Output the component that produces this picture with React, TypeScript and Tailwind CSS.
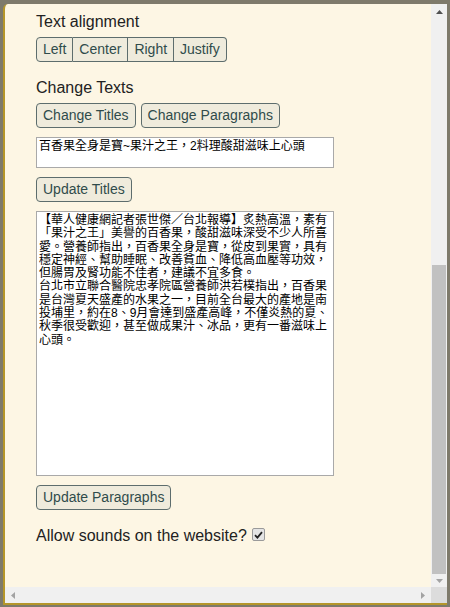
const titleText = "百香果全身是寶~果汁之王，2料理酸甜滋味上心頭";

const paragraphText =
    "【華人健康網記者張世傑／台北報導】炙熱高溫，素有「果汁之王」美譽的百香果，酸甜滋味深受不少人所喜愛。營養師指出，百香果全身是寶，從皮到果實，具有穩定神經、幫助睡眠、改善貧血、降低高血壓等功效，但腸胃及腎功能不佳者，建議不宜多食。\n" +
    "台北市立聯合醫院忠孝院區營養師洪若樸指出，百香果是台灣夏天盛產的水果之一，目前全台最大的產地是南投埔里，約在8、9月會達到盛產高峰，不僅炎熱的夏、秋季很受歡迎，甚至做成果汁、冰品，更有一番滋味上心頭。";

const btn =
    "px-[6px] py-[3px] border border-[#5d6d6d] bg-[#efebdc] text-[#2f4b4b] text-[14px] leading-[17px] rounded-[4px]";

function AlignGroup() {
    const items = ["Left", "Center", "Right", "Justify"];
    return (
        <div className="mt-[6px] flex">
            {items.map((label, i) => (
                <button
                    key={label}
                    type="button"
                    className={
                        "px-[6px] py-[3px] border-y border-r border-[#5d6d6d] bg-[#efebdc] text-[#2f4b4b] text-[14px] leading-[17px] " +
                        (i === 0 ? "border-l rounded-l-[4px] " : "") +
                        (i === items.length - 1 ? "rounded-r-[4px]" : "")
                    }
                >
                    {label}
                </button>
            ))}
        </div>
    );
}

function Checkbox() {
    return (
        <span className="ml-[5px] mt-[1px] w-[13px] h-[13px] flex items-center justify-center border border-[#9a9a9a] bg-[#e4e4e4] rounded-[2px]">
            <svg width="9" height="8" viewBox="0 0 9 8">
                <path d="M1 4.2 L3.4 6.6 L8 1.2" fill="none" stroke="#222" strokeWidth="1.8" />
            </svg>
        </span>
    );
}

export default function App() {
    return (
        <div className="w-[450px] h-[607px] bg-[#7e7a6b] pt-[4px] pl-[3px] pr-[3px] pb-[2px] flex flex-col">
            <div className="flex-1 min-h-0 flex flex-col bg-[#fdf6e4] border-l-2 border-b-2 border-[#b5962a] rounded-tl-[5px] overflow-hidden">
                <div className="flex-1 min-h-0 flex">
                    {/* page content */}
                    <div className="flex-1 min-w-0 pl-[31px] pt-[9px] flex flex-col items-start font-['Liberation_Sans',sans-serif] text-[#222]">
                        <div className="text-[16px] leading-[18px]">Text alignment</div>
                        <AlignGroup />

                        <div className="mt-[17px] text-[16px] leading-[18px]">Change Texts</div>
                        <div className="mt-[6px] flex gap-[5px]">
                            <button type="button" className={btn}>Change Titles</button>
                            <button type="button" className={btn}>Change Paragraphs</button>
                        </div>

                        <textarea
                            defaultValue={titleText}
                            className="mt-[9px] w-[298px] h-[31px] p-[2px] border border-[#a9a9a9] bg-white text-black text-[12px] leading-[13.3px] resize-none overflow-hidden font-['Liberation_Sans','Noto_Sans_CJK_TC',sans-serif]"
                        />
                        <button type="button" className={"mt-[9px] " + btn}>Update Titles</button>

                        <textarea
                            defaultValue={paragraphText}
                            className="mt-[9px] w-[298px] h-[265px] p-[2px] border border-[#a9a9a9] bg-white text-black text-[12px] leading-[13.3px] resize-none overflow-hidden font-['Liberation_Sans','Noto_Sans_CJK_TC',sans-serif]"
                        />
                        <button type="button" className={"mt-[9px] " + btn}>Update Paragraphs</button>

                        <div className="mt-[17px] flex items-start text-[16px] leading-[18px]">
                            <span>Allow sounds on the website?</span>
                            <Checkbox />
                        </div>
                    </div>

                    {/* vertical scrollbar */}
                    <div className="w-[16px] bg-[#f0f0f0] flex flex-col">
                        <div className="h-[16px] flex items-center justify-center">
                            <svg width="7" height="4" viewBox="0 0 7 4">
                                <path d="M0 4 L3.5 0 L7 4Z" fill="#505050" />
                            </svg>
                        </div>
                        <div className="h-[245px]" />
                        <div className="h-[309px] mx-[1px] bg-[#c1c1c1]" />
                        <div className="flex-1 flex items-center justify-center">
                            <svg width="7" height="4" viewBox="0 0 7 4">
                                <path d="M0 0 L7 0 L3.5 4Z" fill="#a3a3a3" />
                            </svg>
                        </div>
                    </div>
                </div>

                {/* horizontal scrollbar */}
                <div className="h-[16px] flex bg-[#f0f0f0]">
                    <div className="w-[16px] flex items-center justify-center">
                        <svg width="4" height="7" viewBox="0 0 4 7">
                            <path d="M4 0 L4 7 L0 3.5Z" fill="#a3a3a3" />
                        </svg>
                    </div>
                    <div className="flex-1" />
                    <div className="w-[16px] flex items-center justify-center">
                        <svg width="4" height="7" viewBox="0 0 4 7">
                            <path d="M0 0 L4 3.5 L0 7Z" fill="#a3a3a3" />
                        </svg>
                    </div>
                    <div className="w-[16px] bg-[#dcdcdc]" />
                </div>
            </div>
        </div>
    );
}
